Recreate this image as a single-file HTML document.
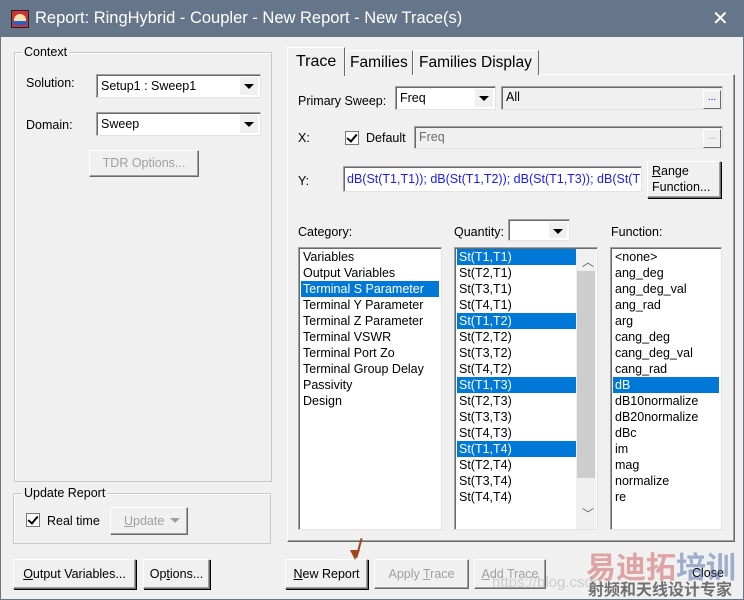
<!DOCTYPE html>
<html><head><meta charset="utf-8"><style>
*{box-sizing:border-box;margin:0;padding:0}
body{width:744px;height:600px;background:#65768a;font-family:"Liberation Sans","Noto Sans CJK SC",sans-serif;font-size:12.5px;color:#000;position:relative;overflow:hidden}
.a{position:absolute}
#client{position:absolute;left:1px;top:37px;width:742px;height:562px;background:#f0f0f0}
.t{position:absolute;white-space:nowrap}
.grp{position:absolute;border:1px solid #c8c8c8;box-shadow:inset 1px 1px 0 #fff}
.lbl{position:absolute;background:#f0f0f0;padding:0 2px;white-space:nowrap}
.field{position:absolute;background:#fff;border:1px solid #a0a0a0;border-right-color:#e3e3e3;border-bottom-color:#e3e3e3;box-shadow:inset 1px 1px 0 #696969;padding:4px 4px 0;white-space:nowrap;overflow:hidden}
.dis{background:#f0f0f0;color:#6d6d6d}
.arr{position:absolute;right:2px;top:2px;bottom:2px;width:18px;background:#f0f0f0}
.arr:after{content:"";position:absolute;left:4px;top:7px;border-left:5px solid transparent;border-right:5px solid transparent;border-top:5px solid #000}
.btn{position:absolute;background:#f0f0f0;border:1px solid #fff;border-right-color:#696969;border-bottom-color:#696969;box-shadow:1px 1px 0 #000 ,inset -1px -1px 0 #a0a0a0;text-align:center;white-space:nowrap}
.btnd{color:#a0a0a0;box-shadow:inset -1px -1px 0 #a0a0a0}
.chk{position:absolute;width:14px;height:14px;background:#fff;border:1px solid #777}
.chk:after{content:"";position:absolute;left:3px;top:0px;width:4px;height:8px;border-right:2px solid #000;border-bottom:2px solid #000;transform:rotate(40deg)}
.list{position:absolute;background:#fff;border:1px solid #a0a0a0;border-right-color:#e3e3e3;border-bottom-color:#e3e3e3;box-shadow:inset 1px 1px 0 #696969;overflow:hidden;padding:1px 2px}
.list div{height:16px;line-height:16px;padding-left:2px;white-space:nowrap}
.sel{background:#0078d7;color:#fff}
.tab{position:absolute;background:#f0f0f0;border:1px solid #fff;border-right-color:#696969;border-bottom:none;font-size:15.5px;padding-left:6px}
</style></head><body>
<div class="a" style="left:11px;top:10px;width:18px;height:18px;background:#c33;border:1px solid #222;">
<div class="a" style="left:2px;top:3px;width:12px;height:8px;background:#f4e3b0;border-radius:6px 6px 2px 2px"></div>
<div class="a" style="left:1px;top:10px;width:14px;height:4px;background:#2a5fc9"></div></div>
<div class="t" style="left:35px;top:9px;color:#fff;font-size:16.5px">Report: RingHybrid - Coupler - New Report - New Trace(s)</div>
<div class="t" style="left:712px;top:6px;color:#fff;font-size:20px;font-weight:300">✕</div>
<div id="client"></div>

<div class="grp" style="left:14px;top:52px;width:258px;height:430px"></div>
<div class="lbl" style="left:22px;top:45px">Context</div>
<div class="t" style="left:26px;top:76px">Solution:</div>
<div class="field" style="left:96px;top:74px;width:165px;height:24px">Setup1 : Sweep1<div class="arr"></div></div>
<div class="t" style="left:26px;top:118px">Domain:</div>
<div class="field" style="left:96px;top:112px;width:165px;height:24px">Sweep<div class="arr"></div></div>
<div class="btn btnd" style="left:89px;top:150px;width:110px;height:27px;line-height:25px">TDR Options...</div>

<div class="grp" style="left:13px;top:493px;width:258px;height:51px"></div>
<div class="lbl" style="left:22px;top:486px">Update Report</div>
<div class="chk" style="left:26px;top:513px"></div>
<div class="t" style="left:47px;top:514px">Real time</div>
<div class="btn btnd" style="left:110px;top:507px;width:78px;height:28px;line-height:26px;text-align:left;padding-left:13px"><u>U</u>pdate<span class="a" style="right:7px;top:10px;border-left:5px solid transparent;border-right:5px solid transparent;border-top:5px solid #a0a0a0"></span></div>
<div class="btn" style="left:13px;top:559px;width:123px;height:30px;line-height:28px"><u>O</u>utput Variables...</div>
<div class="btn" style="left:143px;top:559px;width:67px;height:30px;line-height:28px">Op<u>t</u>ions...</div>

<div class="a" style="left:287px;top:74px;width:448px;height:468px;border:1px solid #fff;border-right-color:#696969;border-bottom-color:#696969;box-shadow:inset -1px -1px 0 #a0a0a0"></div>
<div class="tab" style="left:345px;top:50px;width:68px;height:25px;line-height:24px;padding-left:4px">Families</div>
<div class="tab" style="left:413px;top:50px;width:126px;height:25px;line-height:24px;padding-left:5px">Families Display</div>
<div class="tab" style="left:287px;top:47px;width:58px;height:29px;line-height:27px;font-size:16px;padding-left:8px;z-index:2">Trace</div>

<div class="t" style="left:298px;top:94px">Primary Sweep:</div>
<div class="field" style="left:395px;top:86px;width:101px;height:24px">Freq<div class="arr"></div></div>
<div class="field dis" style="left:501px;top:86px;width:222px;height:24px;color:#000;padding-top:3px">All<div class="btn" style="right:1px;top:3px;width:18px;height:19px;font-size:10px;line-height:14px;color:#00f;box-shadow:none">...</div></div>
<div class="t" style="left:298px;top:131px">X:</div>
<div class="chk" style="left:345px;top:131px"></div>
<div class="t" style="left:366px;top:131px">Default</div>
<div class="field dis" style="left:414px;top:126px;width:309px;height:23px;padding-top:3px">Freq<div class="btn btnd" style="right:1px;top:2px;width:18px;height:19px;font-size:10px;line-height:14px;box-shadow:none">...</div></div>
<div class="t" style="left:298px;top:174px">Y:</div>
<div class="field" style="left:343px;top:166px;width:299px;height:26px;color:#1a1aff;padding-top:5px;padding-left:3px">dB(St(T1,T1)); dB(St(T1,T2)); dB(St(T1,T3)); dB(St(T1,T4))</div>
<div class="btn" style="left:647px;top:161px;width:74px;height:37px;text-align:left;padding:1px 0 0 4px;line-height:16px"><u>R</u>ange<br>Function...</div>

<div class="t" style="left:298px;top:225px">Category:</div>
<div class="t" style="left:454px;top:225px">Quantity:</div>
<div class="field" style="left:508px;top:219px;width:62px;height:22px"><div class="arr"></div></div>
<div class="t" style="left:611px;top:225px">Function:</div>

<div class="list" style="left:298px;top:247px;width:144px;height:283px">
<div>Variables</div><div>Output Variables</div><div class="sel">Terminal S Parameter</div><div>Terminal Y Parameter</div><div>Terminal Z Parameter</div><div>Terminal VSWR</div><div>Terminal Port Zo</div><div>Terminal Group Delay</div><div>Passivity</div><div>Design</div></div>

<div class="list" style="left:454px;top:247px;width:144px;height:283px">
<div class="sel" style="width:119px">St(T1,T1)</div><div>St(T2,T1)</div><div>St(T3,T1)</div><div>St(T4,T1)</div>
<div class="sel" style="width:119px">St(T1,T2)</div><div>St(T2,T2)</div><div>St(T3,T2)</div><div>St(T4,T2)</div>
<div class="sel" style="width:119px">St(T1,T3)</div><div>St(T2,T3)</div><div>St(T3,T3)</div><div>St(T4,T3)</div>
<div class="sel" style="width:119px">St(T1,T4)</div><div>St(T2,T4)</div><div>St(T3,T4)</div><div>St(T4,T4)</div>
<div class="a" style="left:121px;top:1px;width:20px;height:280px;background:#f0f0f0;padding:0"></div>
<div class="a" style="left:122px;top:23px;width:18px;height:207px;background:#cdcdcd;padding:0"></div>
<div class="a" style="left:127px;top:6px;font-size:12px;padding:0;color:#606060">︿</div>
<div class="a" style="left:127px;top:258px;font-size:12px;padding:0;color:#606060">﹀</div>
</div>

<div class="list" style="left:610px;top:247px;width:112px;height:283px">
<div>&lt;none&gt;</div><div>ang_deg</div><div>ang_deg_val</div><div>ang_rad</div><div>arg</div><div>cang_deg</div><div>cang_deg_val</div><div>cang_rad</div><div class="sel">dB</div><div>dB10normalize</div><div>dB20normalize</div><div>dBc</div><div>im</div><div>mag</div><div>normalize</div><div>re</div></div>

<div class="btn" style="left:285px;top:559px;width:83px;height:30px;line-height:28px"><u>N</u>ew Report</div>
<div class="btn btnd" style="left:374px;top:559px;width:95px;height:30px;line-height:28px">Apply <u>T</u>race</div>
<div class="btn btnd" style="left:474px;top:559px;width:72px;height:30px;line-height:28px"><u>A</u>dd Trace</div>
<div class="t" style="left:692px;top:566px">Close</div>
<div class="a" style="left:358px;top:538px;width:2px;height:20px;background:#a0441c;transform:rotate(15deg)"></div>
<div class="a" style="left:350px;top:550px;border-left:5px solid transparent;border-right:5px solid transparent;border-top:10px solid #a0441c"></div>
<div class="t" style="left:586px;top:543px;font-size:30px;font-weight:bold;color:rgba(200,70,70,.45);letter-spacing:0px">易迪拓<span style="color:rgba(60,90,160,.45)">培训</span></div>
<div class="t" style="left:588px;top:576px;font-size:16px;font-weight:bold;color:rgba(70,70,70,.75)">射频和天线设计专家</div>
<div class="t" style="left:492px;top:574px;font-size:15px;color:rgba(150,150,150,.4)">https://blog.csdn</div>
</body></html>
